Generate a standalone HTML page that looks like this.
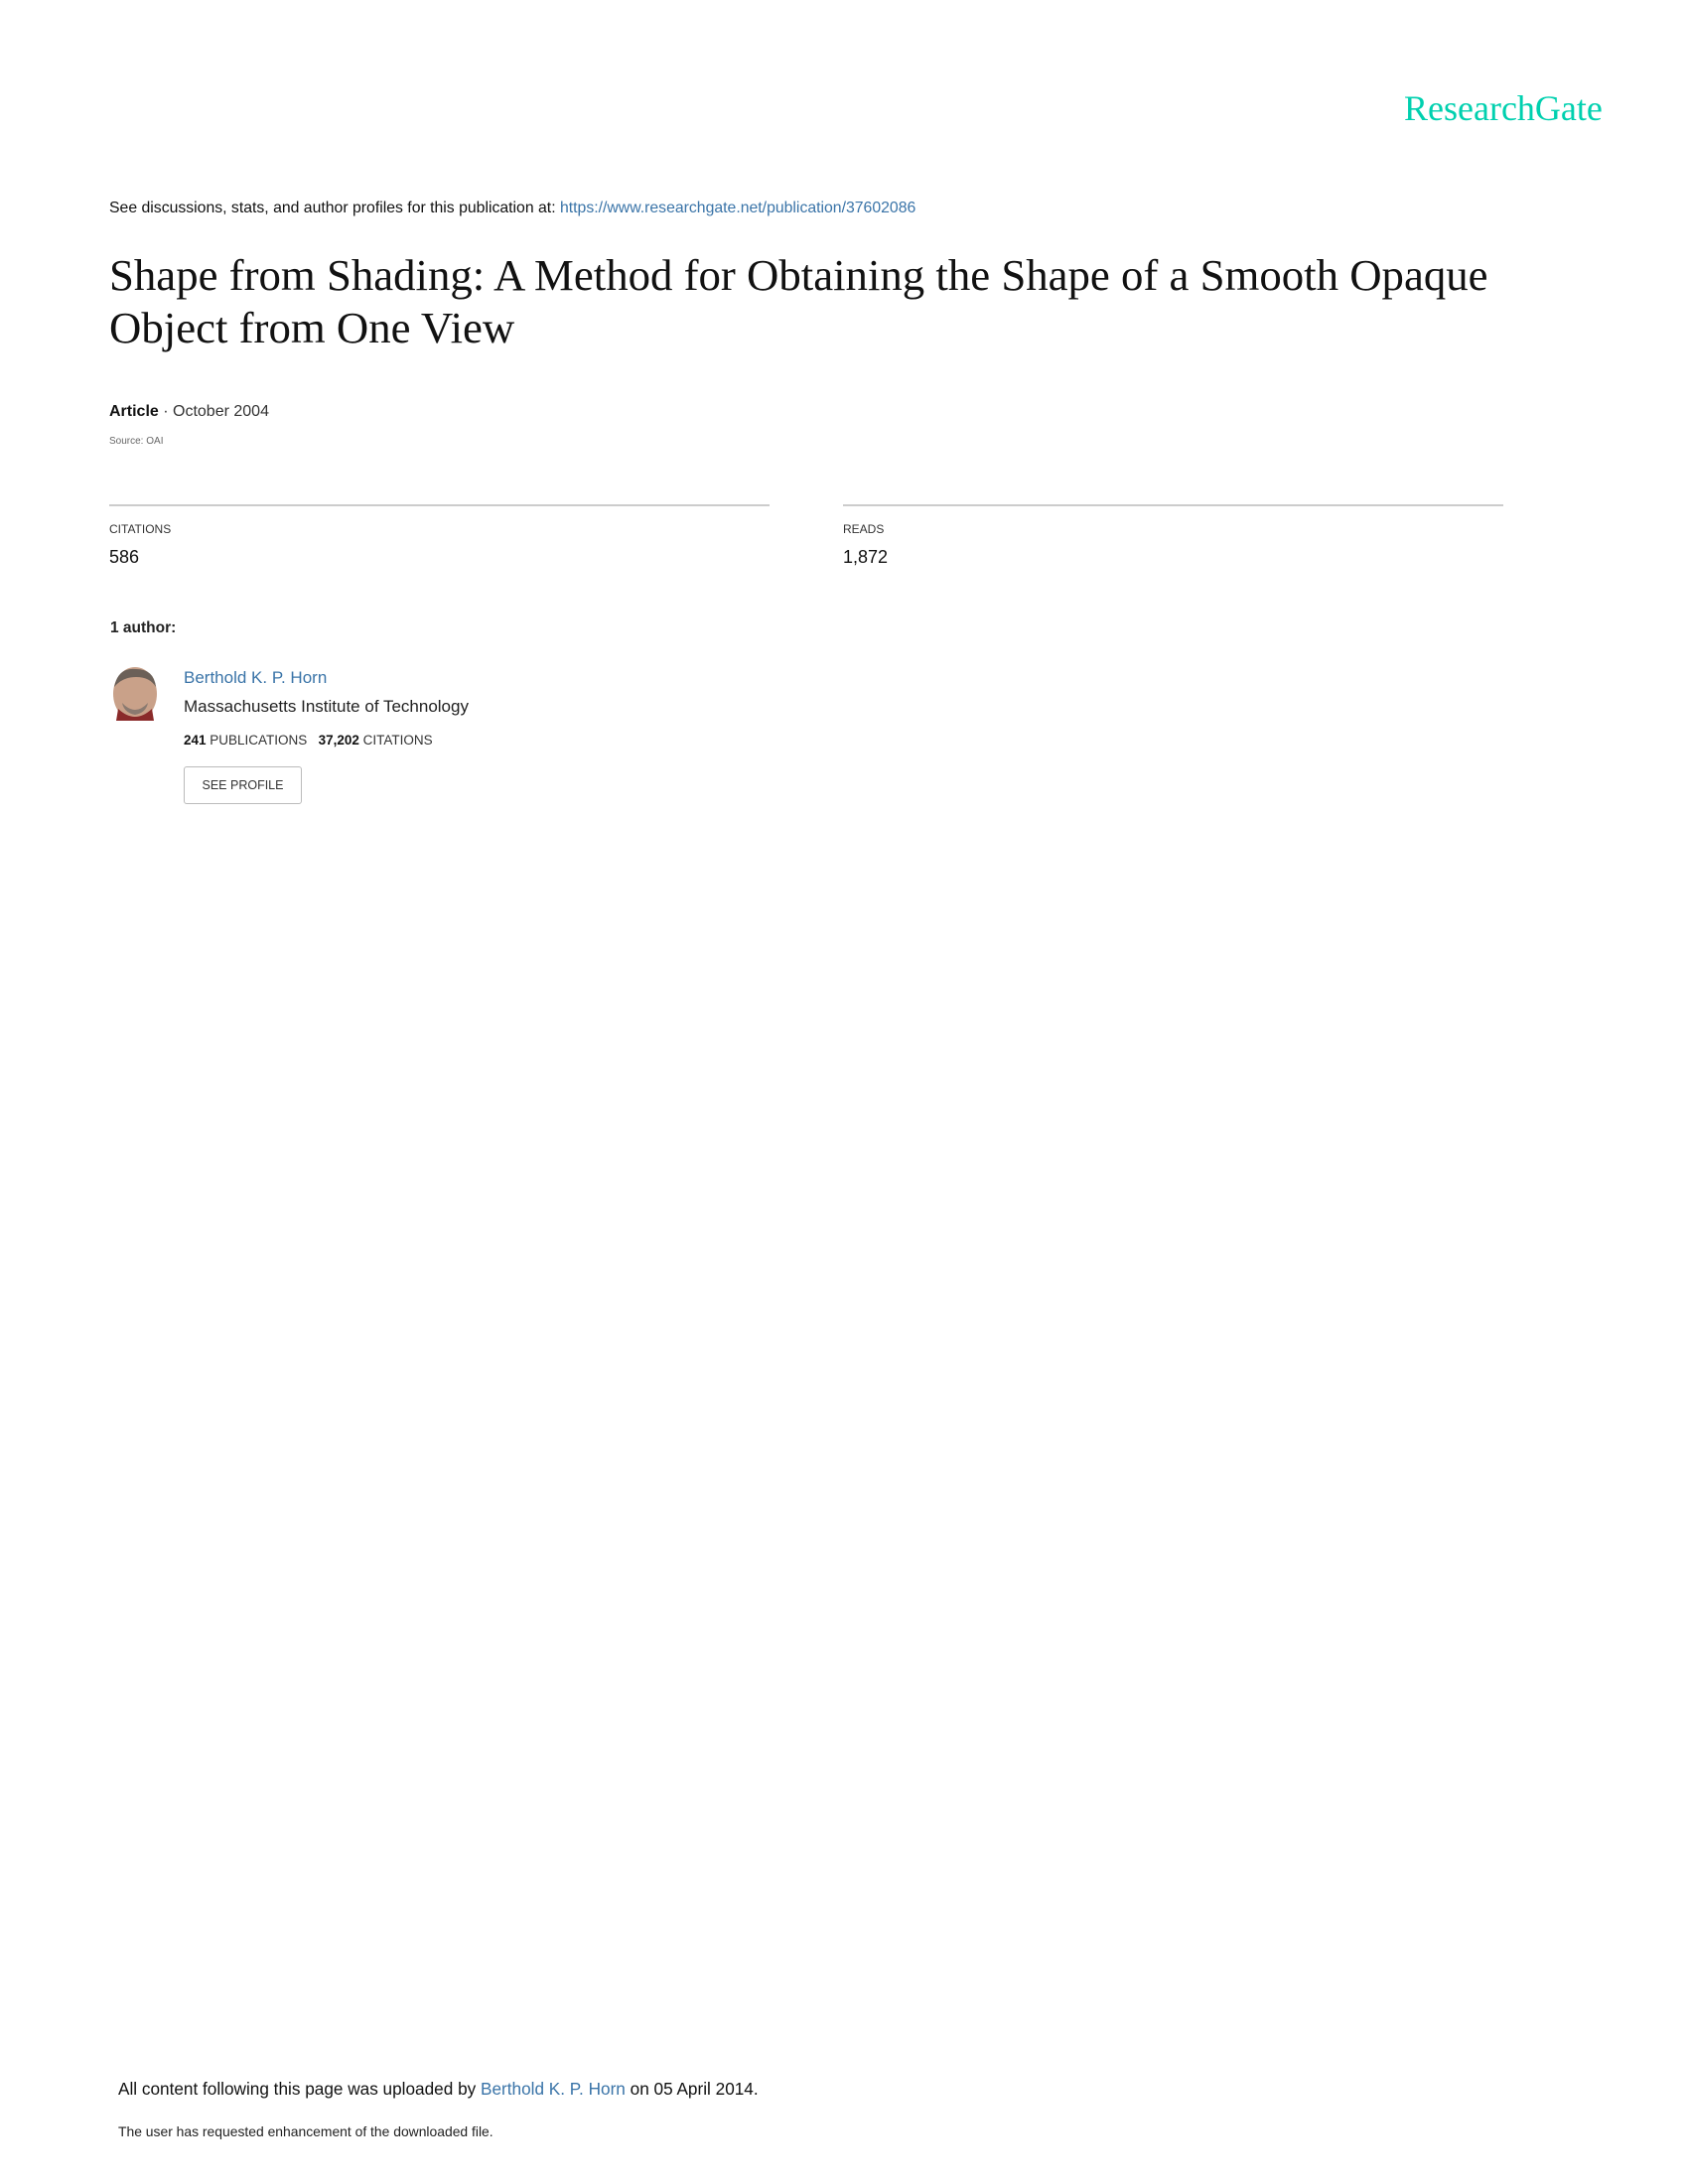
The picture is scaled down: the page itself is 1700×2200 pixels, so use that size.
<!DOCTYPE html>
<html><head><meta charset="utf-8"><style>
body{margin:0;width:1700px;height:2200px;background:#fff;position:relative;font-family:"Liberation Sans",sans-serif;color:#111;}
.a{position:absolute;white-space:nowrap;}
a{color:#3a74a8;text-decoration:none}
</style></head><body>
<div class="a" style="left:1414px;top:88px;font-family:'Liberation Serif',serif;font-size:36px;color:#00d0af;">ResearchGate</div>
<div class="a" style="left:110px;top:201px;font-size:15.8px;">See discussions, stats, and author profiles for this publication at: <a>https://www.researchgate.net/publication/37602086</a></div>
<div class="a" style="left:110px;top:251px;font-family:'Liberation Serif',serif;font-size:44.8px;line-height:53px;color:#111;">Shape from Shading: A Method for Obtaining the Shape of a Smooth Opaque<br>Object from One View</div>
<div class="a" style="left:110px;top:406px;font-size:16px;color:#333;"><b style="color:#111">Article</b> · October 2004</div>
<div class="a" style="left:110px;top:439px;font-size:10px;color:#666;">Source: OAI</div>
<div class="a" style="left:110px;top:508px;width:665px;height:2px;background:#ccc;"></div>
<div class="a" style="left:849px;top:508px;width:665px;height:2px;background:#ccc;"></div>
<div class="a" style="left:110px;top:526px;font-size:12px;color:#333;">CITATIONS</div>
<div class="a" style="left:110px;top:551px;font-size:18px;color:#111;">586</div>
<div class="a" style="left:849px;top:526px;font-size:12px;color:#333;">READS</div>
<div class="a" style="left:849px;top:551px;font-size:18px;color:#111;">1,872</div>
<div class="a" style="left:111px;top:624px;font-size:15.5px;font-weight:bold;color:#222;">1 author:</div>
<svg class="a" style="left:111px;top:670px" width="50" height="58" viewBox="0 0 50 58">
<ellipse cx="25" cy="29" rx="22" ry="27" fill="#c9a189"/>
<path d="M4 22 Q8 2 26 4 Q44 4 46 22 Q40 12 26 12 Q12 12 4 22Z" fill="#6b6058"/>
<path d="M8 44 Q25 60 42 44 L44 56 L6 56Z" fill="#8a2a2a"/>
<path d="M12 38 Q25 52 38 38 Q36 48 25 50 Q14 48 12 38Z" fill="#8a7a70"/>
</svg>
<div class="a" style="left:185px;top:673px;font-size:17px;"><a>Berthold K. P. Horn</a></div>
<div class="a" style="left:185px;top:702px;font-size:17px;color:#222;">Massachusetts Institute of Technology</div>
<div class="a" style="left:185px;top:738px;font-size:13.5px;color:#333;"><b style="color:#111">241</b> PUBLICATIONS &nbsp;&nbsp;<b style="color:#111">37,202</b> CITATIONS</div>
<div class="a" style="left:185px;top:772px;width:117px;height:36px;border:1.5px solid #bbb;border-radius:3px;font-size:12.5px;color:#333;text-align:center;line-height:36px;">SEE PROFILE</div>
<div class="a" style="left:119px;top:2094px;font-size:17.2px;color:#111;">All content following this page was uploaded by <a>Berthold K. P. Horn</a> on 05 April 2014.</div>
<div class="a" style="left:119px;top:2139px;font-size:13.9px;color:#222;">The user has requested enhancement of the downloaded file.</div>
</body></html>
